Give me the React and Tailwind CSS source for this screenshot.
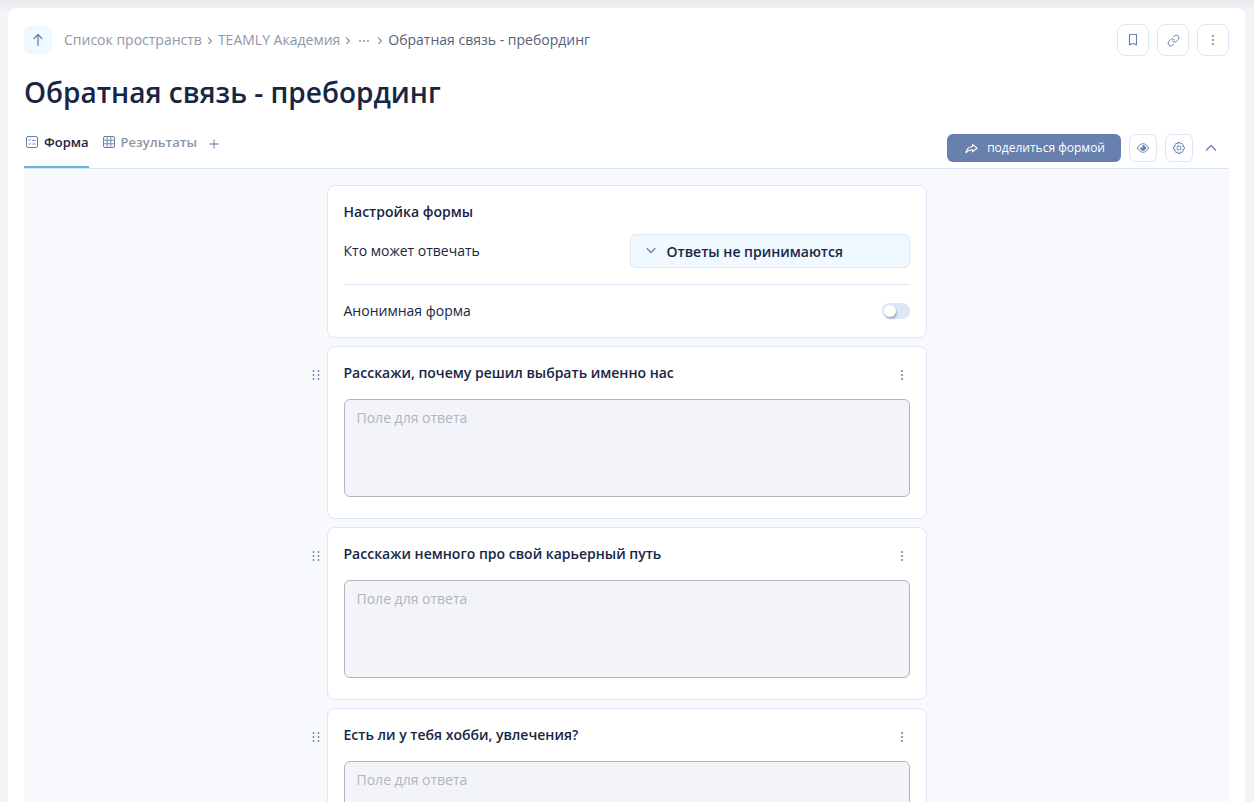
import { Link } from 'lucide-react'

const questions = [
  { id: 'reason', title: 'Расскажи, почему решил выбрать именно нас' },
  { id: 'career', title: 'Расскажи немного про свой карьерный путь' },
  { id: 'hobby', title: 'Есть ли у тебя хобби, увлечения?' },
]

function Icon({ size = 12, children }) {
  return (
    <svg
      width={size}
      height={size}
      viewBox={`0 0 ${size} ${size}`}
      fill="none"
      stroke="currentColor"
      strokeLinecap="round"
      strokeLinejoin="round"
      aria-hidden="true"
      className="shrink-0"
    >
      {children}
    </svg>
  )
}

function ArrowUpIcon() {
  return (
    <Icon size={16}>
      <path d="M8 13.5V2.5M4 6.5l4-4 4 4" strokeWidth="1.3" />
    </Icon>
  )
}

function CrumbArrow() {
  return (
    <Icon size={8}>
      <path d="M2.5 2l3 3-3 3" strokeWidth="1.2" />
    </Icon>
  )
}

function BookmarkIcon() {
  return (
    <Icon size={14}>
      <path d="M3.5 1.5h7v10.5l-1.7-1.2H5.2L3.5 12z" strokeWidth="1.1" />
    </Icon>
  )
}

function DotsIcon() {
  return (
    <svg width="12" height="16" viewBox="0 0 12 16" fill="currentColor" aria-hidden="true">
      <circle cx="6" cy="4" r="1" />
      <circle cx="6" cy="8" r="1" />
      <circle cx="6" cy="12" r="1" />
    </svg>
  )
}

function DragIcon() {
  return (
    <svg width="10" height="10" viewBox="0 0 10 10" fill="currentColor" aria-hidden="true">
      <circle cx="3.5" cy="1" r="0.9" />
      <circle cx="8.5" cy="1" r="0.9" />
      <circle cx="3.5" cy="5" r="0.9" />
      <circle cx="8.5" cy="5" r="0.9" />
      <circle cx="3.5" cy="9" r="0.9" />
      <circle cx="8.5" cy="9" r="0.9" />
    </svg>
  )
}

function FormIcon() {
  return (
    <Icon>
      <rect x="0.5" y="0.5" width="11" height="11" rx="1.5" />
      <path d="M2.5 4l.8.8 1.4-1.5M2.5 7.8l.8.8 1.4-1.5M6.5 4.5h3M6.5 8h3" strokeWidth="0.8" />
    </Icon>
  )
}

function TableIcon() {
  return (
    <Icon>
      <rect x="0.5" y="0.5" width="11" height="11" rx="1.5" />
      <path d="M4.2.5v11M7.8.5v11M.5 4.2h11M.5 7.8h11" strokeWidth="0.9" />
    </Icon>
  )
}

function ShareIcon() {
  return (
    <Icon size={16}>
      <path d="M9.5 4.5l4.5 3.7-4.5 3.6V9.7C7 9.5 5 10.5 3 12.700c.4-3.200 2.800-5.800 6.500-6.200z" strokeWidth="1.1" />
    </Icon>
  )
}

function EyeIcon() {
  return (
    <Icon>
      <path d="M.5 6C1.5 3.4 3.5 1.7 6 1.7s4.5 1.7 5.5 4.3c-1 2.6-3 4.3-5.5 4.3S1.5 8.6.5 6z" strokeWidth="0.9" />
      <path d="M6 3.500v2.500H3.500A2.500 2.500 0 1 0 6 3.500z" fill="currentColor" strokeWidth="0.9" />
    </Icon>
  )
}

function GearIcon() {
  return (
    <Icon>
      <path
        d="M5 .6h2l.5 1.3 1.3-.5 1.5 1.400-.5 1.400 1.500.7v2l-1.500.7.5 1.500-1.500 1.400-1.300-.6-.5 1.500H5l-.5-1.500-1.300.6-1.500-1.400.5-1.500-1.500-.7v-2l1.500-.7-.5-1.400 1.500-1.400 1.300.5z"
        strokeWidth="1"
      />
      <rect x="4.2" y="4.2" width="3.6" height="3.6" rx="1" strokeWidth="1" />
    </Icon>
  )
}

function ChevronUpIcon() {
  return (
    <Icon>
      <path d="M1.5 8L6 3.5 10.5 8" strokeWidth="1.3" />
    </Icon>
  )
}

function HeaderButton({ label, children }) {
  return (
    <button
      type="button"
      aria-label={label}
      className="flex size-8 items-center justify-center rounded-lg border border-[#dde7f6] bg-white text-[#677fae]"
    >
      {children}
    </button>
  )
}

function ToolButton({ label, children }) {
  return (
    <button
      type="button"
      aria-label={label}
      className="flex size-7 items-center justify-center rounded-md border border-[#dde7f6] bg-white text-[#677fae]"
    >
      {children}
    </button>
  )
}

function SettingsCard() {
  return (
    <section className="mx-6 rounded-lg border border-[#dde7f6] bg-white p-4">
      <h2 className="font-semibold">Настройка формы</h2>
      <div className="mt-3 flex items-center justify-between border-b border-[#dde7f6] pb-4">
        <label htmlFor="access">Кто может отвечать</label>
        <div className="relative w-[280px]">
          <select
            id="access"
            className="h-[34px] w-full appearance-none rounded-md border border-[#dde7f6] bg-[#f0f9ff] pt-0.5 pr-4 pl-9 font-semibold"
          >
            <option>Ответы не принимаются</option>
          </select>
          <span className="pointer-events-none absolute top-2.5 left-[15px] text-[#677fae]">
            <Icon>
              <path d="M2 4.5l4 4 4-4" strokeWidth="1.2" />
            </Icon>
          </span>
        </div>
      </div>
      <div className="mt-4 flex items-center justify-between">
        <label htmlFor="anonymous">Анонимная форма</label>
        <input
          id="anonymous"
          type="checkbox"
          role="switch"
          className="h-4 w-7 appearance-none rounded-full bg-[#dce6f6] p-0.5 before:block before:size-3 before:rounded-full before:bg-white before:shadow-[1px_2px_2px_rgba(23,38,68,0.3)] checked:bg-[#677fae] checked:before:ml-3"
        />
      </div>
    </section>
  )
}

function QuestionCard({ id, title }) {
  return (
    <div className="flex items-start pr-6">
      <button type="button" aria-label="Переместить" className="flex w-6 justify-center pt-6 text-[#677fae]">
        <DragIcon />
      </button>
      <section className="min-w-0 flex-1 rounded-lg border border-[#dde7f6] bg-white px-4 pt-4 pb-[21px]">
        <div className="flex items-end justify-between pr-0.5">
          <label htmlFor={id} className="font-semibold">
            {title}
          </label>
          <button type="button" aria-label="Действия с вопросом" className="text-[#677fae]">
            <DotsIcon />
          </button>
        </div>
        <textarea
          id={id}
          placeholder="Поле для ответа"
          className="mt-4 block h-[98px] w-full resize-none rounded-md border border-[#b2b4bb] bg-[#f3f4f9] px-3 py-2 placeholder:text-[#afb6c1]"
        />
      </section>
    </div>
  )
}

export default function App() {
  return (
    <div className="flex h-screen bg-[#f3f4f8] bg-[linear-gradient(180deg,#e8e9ed_0px,#f3f4f8_12px)] pt-2 pr-[9px] pl-2 font-['Open_Sans',sans-serif] text-sm text-[#172644]">
      <main className="flex min-w-0 flex-1 flex-col rounded-t-lg bg-white px-4 pt-4">
        <header className="flex items-center justify-between">
          <nav aria-label="Навигация" className="flex items-center gap-1 text-[#8f98a8]">
            <a
              href="#up"
              aria-label="Наверх"
              className="mr-2 flex size-7 items-center justify-center rounded-md bg-[#f0f9ff] text-[#677fae]"
            >
              <ArrowUpIcon />
            </a>
            <a href="#spaces">Список пространств</a>
            <CrumbArrow />
            <a href="#academy">TEAMLY Академия</a>
            <CrumbArrow />
            <button type="button" aria-label="Показать путь">
              <svg width="16" height="8" viewBox="0 0 16 8" fill="currentColor" aria-hidden="true">
                <circle cx="4" cy="5" r="1" />
                <circle cx="8" cy="5" r="1" />
                <circle cx="12" cy="5" r="1" />
              </svg>
            </button>
            <CrumbArrow />
            <a href="#form" aria-current="page" className="text-[#56617a]">
              Обратная связь - пребординг
            </a>
          </nav>

          <div className="flex gap-2">
            <HeaderButton label="В закладки">
              <BookmarkIcon />
            </HeaderButton>
            <HeaderButton label="Скопировать ссылку">
              <Link size={13} strokeWidth={1.8} />
            </HeaderButton>
            <HeaderButton label="Ещё">
              <DotsIcon />
            </HeaderButton>
          </div>
        </header>

        <h1 className="mt-4 text-[28px] leading-10 font-semibold">Обратная связь - пребординг</h1>

        <div className="mt-3.5 flex justify-between border-b border-[#d8e6f4]">
          <div className="flex h-[42px] gap-3 text-[13px] font-semibold">
            <button type="button" className="flex items-center gap-1.5 border-b-2 border-[#63b4dc] pb-2 pl-0.5">
              <span className="text-[#677fae]">
                <FormIcon />
              </span>
              Форма
            </button>
            <button type="button" className="flex items-center gap-1.5 pb-2.5 pl-0.5 text-[#8b95a5]">
              <span className="text-[#677fae]">
                <TableIcon />
              </span>
              Результаты
            </button>
            <button type="button" aria-label="Добавить вкладку" className="flex items-center pb-1.5 text-[#8b9abb]">
              <Icon size={10}>
                <path d="M5 1v8M1 5h8" strokeWidth="1.3" />
              </Icon>
            </button>
          </div>

          <div className="flex items-center gap-2 pt-0.5 pr-2">
            <button
              type="button"
              className="flex h-7 items-center gap-2 rounded-md bg-[#6880ae] px-4 text-xs text-white"
            >
              <ShareIcon />
              поделиться формой
            </button>
            <ToolButton label="Просмотр">
              <EyeIcon />
            </ToolButton>
            <ToolButton label="Настройки">
              <GearIcon />
            </ToolButton>
            <button type="button" aria-label="Свернуть" className="flex w-5 justify-center text-[#677fae]">
              <ChevronUpIcon />
            </button>
          </div>
        </div>

        <div className="min-h-0 flex-1 overflow-y-auto bg-[#f7f9fd] py-4 [scrollbar-width:none]">
          <form className="mx-auto flex max-w-[648px] flex-col gap-2">
            <SettingsCard />
            {questions.map((question) => (
              <QuestionCard key={question.id} {...question} />
            ))}
          </form>
        </div>
      </main>
    </div>
  )
}
